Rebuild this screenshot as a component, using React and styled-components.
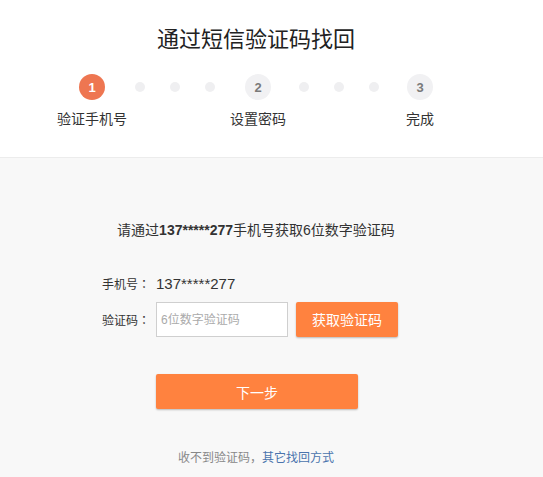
import styled, { createGlobalStyle } from "styled-components";

const GlobalStyle = createGlobalStyle`
  body {
    margin: 0;
    background: #f8f8f8;
    font-family: "Liberation Sans", "Noto Sans CJK SC", sans-serif;
    color: #333;
  }
`;

const Header = styled.header`
  background: #fff;
  height: 157px;
  border-bottom: 1px solid #ececec;
`;

const Wrap = styled.div`
  width: 512px;
  display: flex;
  flex-direction: column;
  align-items: center;
`;

const Title = styled.h1`
  margin: 27px 0 0;
  font-size: 22px;
  line-height: 26px;
  font-weight: normal;
  color: #222;
`;

const Steps = styled.div`
  display: flex;
  align-items: flex-start;
  margin-top: 21px;
`;

const Step = styled.div`
  width: 26px;
  display: flex;
  flex-direction: column;
  align-items: center;
`;

const Circle = styled.div`
  width: 26px;
  height: 26px;
  border-radius: 50%;
  background: ${(p) => (p.active ? "#ee7651" : "#f1f1f3")};
  color: ${(p) => (p.active ? "#fff" : "#7a7a7a")};
  font-size: 13px;
  font-weight: bold;
  display: flex;
  align-items: center;
  justify-content: center;
`;

const StepLabel = styled.div`
  margin-top: 9px;
  font-size: 14px;
  line-height: 20px;
  white-space: nowrap;
  color: #333;
`;

const Dots = styled.div`
  display: flex;
  gap: 25px;
  height: 26px;
  align-items: center;
  padding: 0 ${(p) => p.pad || 30}px;
`;

const Dot = styled.span`
  width: 10px;
  height: 10px;
  border-radius: 50%;
  background: #efeff1;
`;

const Notice = styled.p`
  margin: 62px 0 0;
  font-size: 14px;
  line-height: 20px;
  color: #333;
  b {
    font-weight: bold;
  }
`;

const Form = styled.div`
  margin-top: 33px;
  width: 308px;
  display: flex;
  flex-direction: column;
  gap: 8px;
`;

const Row = styled.div`
  display: flex;
  align-items: center;
  height: ${(p) => p.h || 20}px;
`;

const Label = styled.span`
  width: 54px;
  font-family: "Noto Sans CJK TC", sans-serif;
  font-size: 12px;
  color: #333;
`;

const Value = styled.span`
  font-size: 15px;
  color: #333;
`;

const Input = styled.input`
  box-sizing: border-box;
  width: 132px;
  height: 35px;
  margin-top: 1px;
  border: 1px solid #cfcfcf;
  padding: 0 4px;
  font-size: 12px;
  font-family: inherit;
  outline: none;
  &::placeholder {
    color: #aaa;
  }
`;

const Button = styled.button`
  box-sizing: border-box;
  width: ${(p) => p.w}px;
  height: 35px;
  margin-left: ${(p) => p.ml || 0}px;
  border: none;
  border-radius: 2px;
  background: #ff823f;
  color: #fff;
  font-size: 14px;
  font-family: inherit;
  box-shadow: 0 1px 2px rgba(0, 0, 0, 0.25);
  cursor: pointer;
`;

const NextRow = styled.div`
  margin-top: 37px;
  width: 308px;
  box-sizing: border-box;
  padding-left: 54px;
  display: flex;
`;

const Help = styled.p`
  margin: 38px 0 0;
  font-family: "Noto Sans CJK SC", sans-serif;
  font-size: 12px;
  line-height: 20px;
  color: #888;
  a {
    color: #4a74ad;
    text-decoration: none;
  }
`;

export default function App() {
  return (
    <>
      <GlobalStyle />
      <Header>
        <Wrap>
          <Title>通过短信验证码找回</Title>
          <Steps>
            <Step>
              <Circle active>1</Circle>
              <StepLabel>验证手机号</StepLabel>
            </Step>
            <Dots>
              <Dot />
              <Dot />
              <Dot />
            </Dots>
            <Step>
              <Circle>2</Circle>
              <StepLabel>设置密码</StepLabel>
            </Step>
            <Dots pad={28}>
              <Dot />
              <Dot />
              <Dot />
            </Dots>
            <Step>
              <Circle>3</Circle>
              <StepLabel>完成</StepLabel>
            </Step>
          </Steps>
        </Wrap>
      </Header>
      <Wrap>
        <Notice>
          请通过<b>137*****277</b>手机号获取6位数字验证码
        </Notice>
        <Form>
          <Row>
            <Label>手机号：</Label>
            <Value>137*****277</Value>
          </Row>
          <Row h={36}>
            <Label>验证码：</Label>
            <Input placeholder="6位数字验证码" />
            <Button w={102} ml={8}>获取验证码</Button>
          </Row>
        </Form>
        <NextRow>
          <Button w={202}>下一步</Button>
        </NextRow>
        <Help>
          收不到验证码，<a href="#">其它找回方式</a>
        </Help>
      </Wrap>
    </>
  );
}
